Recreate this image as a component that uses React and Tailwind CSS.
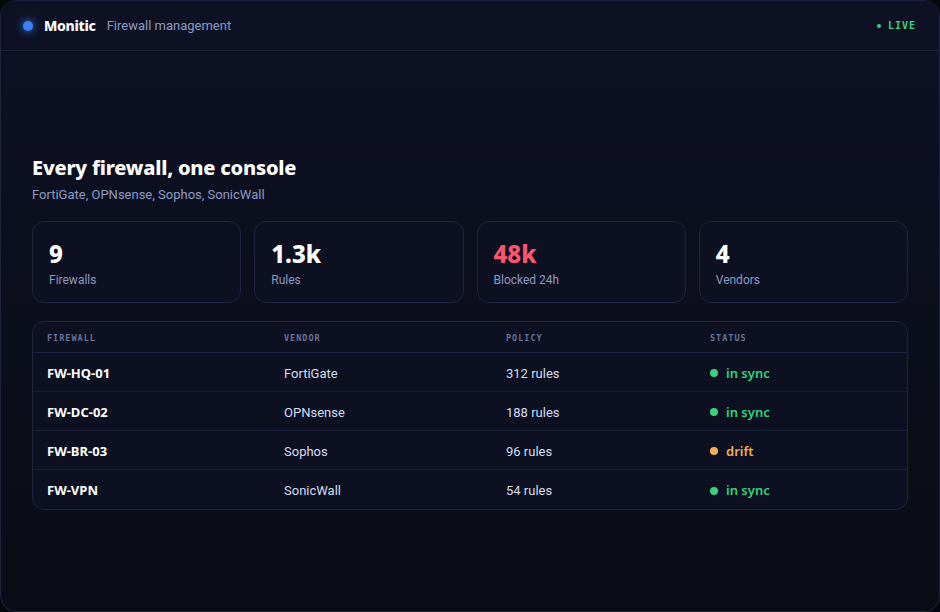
import React from 'react';

const stats = [
  { value: '9', label: 'Firewalls' },
  { value: '1.3k', label: 'Rules' },
  { value: '48k', label: 'Blocked 24h', alert: true },
  { value: '4', label: 'Vendors' },
];

const firewalls = [
  { name: 'FW-HQ-01', vendor: 'FortiGate', rules: 312, status: 'in sync' },
  { name: 'FW-DC-02', vendor: 'OPNsense', rules: 188, status: 'in sync' },
  { name: 'FW-BR-03', vendor: 'Sophos', rules: 96, status: 'drift' },
  { name: 'FW-VPN', vendor: 'SonicWall', rules: 54, status: 'in sync' },
];

const cols = 'grid grid-cols-[237px_222px_204px_1fr]';
const body = "font-['Roboto',sans-serif]";

function StatCard({ value, label, alert }) {
  return (
    <div className="h-[82px] rounded-xl border border-[#1f2540] bg-[#0d1021] px-4 pt-[17px]">
      <div className={`text-[24px] font-extrabold leading-[30px] ${alert ? 'text-[#f7566c]' : 'text-white'}`}>
        {value}
      </div>
      <div className={`mt-[3px] text-[12px] leading-4 text-[#8d9bc2] ${body}`}>{label}</div>
    </div>
  );
}

function StatusBadge({ status }) {
  const ok = status === 'in sync';
  return (
    <div className="flex items-center gap-[8px]">
      <span className={`h-[8px] w-[8px] rounded-full ${ok ? 'bg-[#34d47f]' : 'bg-[#f6ad55]'}`} />
      <span className={`text-[13px] font-semibold ${ok ? 'text-[#34d47f]' : 'text-[#f6ad55]'}`}>{status}</span>
    </div>
  );
}

export default function App() {
  return (
    <div className="h-[612px] w-[940px] bg-[#07080e] font-['Noto_Sans',sans-serif]">
      <div className="flex h-full flex-col overflow-hidden rounded-2xl border border-[#1d2340] bg-gradient-to-b from-[#0e1124] to-[#0a0c15]">
        {/* header */}
        <header className="flex h-[50px] shrink-0 items-center justify-between border-b border-[#1d2238] bg-[#0e1124] pl-[22px] pr-[23px]">
          <div className="flex items-center">
            <span className="h-[10px] w-[10px] rounded-full bg-[#3b82f6] shadow-[0_0_8px_#3b82f6]" />
            <span className="ml-[11px] text-[14px] font-extrabold tracking-[-0.3px] text-white">Monitic</span>
            <span className={`ml-[11px] text-[13px] text-[#8d9bc2] ${body}`}>Firewall management</span>
          </div>
          <div className="flex items-center gap-[7px] font-['DejaVu_Sans_Mono',monospace] text-[10px] font-bold tracking-[1px] text-[#34d47f]">
            <span className="h-[4px] w-[4px] rounded-full bg-[#34d47f]" />
            LIVE
          </div>
        </header>

        {/* main */}
        <main className="flex flex-1 flex-col justify-center px-[31px] pt-[2px]">
          <h1 className="text-[20px] font-extrabold leading-7 tracking-[-0.2px] text-white">Every firewall, one console</h1>
          <p className={`mt-[3px] text-[13px] text-[#8d9bc2] ${body}`}>FortiGate, OPNsense, Sophos, SonicWall</p>

          <div className="mt-[17px] grid grid-cols-4 gap-[13px]">
            {stats.map((s) => (
              <StatCard key={s.label} {...s} />
            ))}
          </div>

          <div className="mt-[18px] overflow-hidden rounded-xl border border-[#1f2540] bg-[#0d1021]">
            <div className={`${cols} h-[31px] items-center border-b border-[#1f2540] pt-[3px] font-['DejaVu_Sans_Mono',monospace] text-[8.5px] font-bold tracking-[1px] text-[#66739a]`}>
              <div className="pl-[14px]">FIREWALL</div>
              <div className="pl-[14px]">VENDOR</div>
              <div className="pl-[14px]">POLICY</div>
              <div className="pl-[14px]">STATUS</div>
            </div>
            {firewalls.map((fw, i) => (
              <div
                key={fw.name}
                className={`${cols} h-[39px] items-center pt-[2px] ${i < firewalls.length - 1 ? 'border-b border-[#1a1f36]' : ''}`}
              >
                <div className="pl-[14px] text-[13px] font-bold text-white">{fw.name}</div>
                <div className={`pl-[14px] text-[13px] text-[#d4dcf0] ${body}`}>{fw.vendor}</div>
                <div className={`pl-[14px] text-[13px] text-[#d4dcf0] ${body}`}>{fw.rules} rules</div>
                <div className="pl-[14px]">
                  <StatusBadge status={fw.status} />
                </div>
              </div>
            ))}
          </div>
        </main>
      </div>
    </div>
  );
}
